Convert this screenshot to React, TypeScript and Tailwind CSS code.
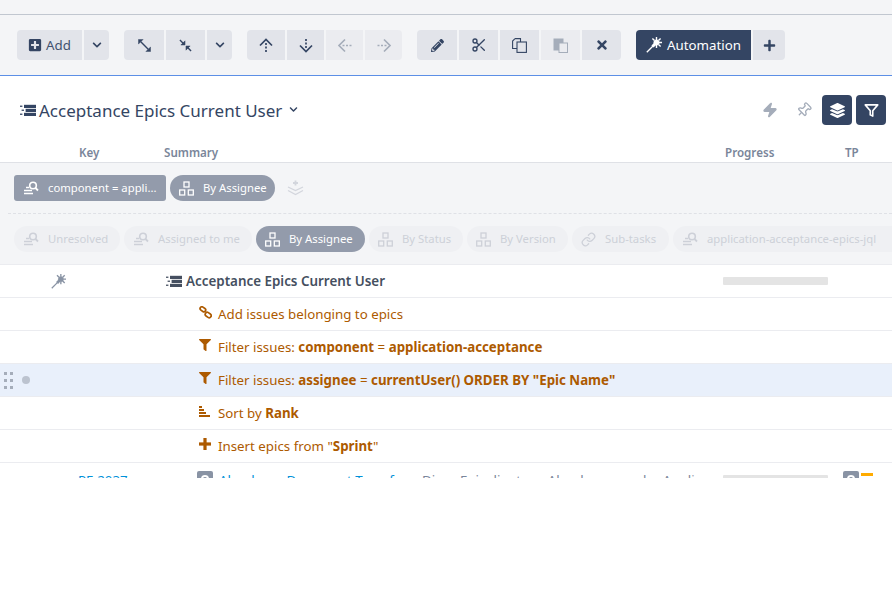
import { type ReactNode } from "react";
import { FaChevronDown, FaFilter, FaLayerGroup, FaPencilAlt, FaPlus, FaPlusSquare, FaTimes } from "react-icons/fa";
import { FiFilter } from "react-icons/fi";
import { LuLink, LuPin, LuScissors, LuZap } from "react-icons/lu";

const navy = "#344563";

function Btn({ w, children, off, left, right }: { w: string; children: ReactNode; off?: boolean; left?: boolean; right?: boolean }) {
  return (
    <div
      className={`${w} h-[30px] flex items-center justify-center gap-[4px] ${off ? "bg-[#ebecf0] text-[#a5adba]" : "bg-[#e2e4ea] text-[#344563]"} ${left ? "rounded-l-[4px]" : ""} ${right ? "rounded-r-[4px]" : ""}`}
    >
      {children}
    </div>
  );
}

function ListIcon({ size = 16, color = navy }: { size?: number; color?: string }) {
  return (
    <svg width={size} height={size * 0.8} viewBox="0 0 20 16" fill={color}>
      <rect x="5" y="1" width="15" height="4" />
      <rect x="7" y="6" width="13" height="4" />
      <rect x="5" y="11" width="15" height="4" />
      <rect x="0" y="2" width="3" height="1.6" />
      <rect x="2" y="7" width="3" height="1.6" />
      <rect x="0" y="12" width="3" height="1.6" />
    </svg>
  );
}

function Wand({ size = 16 }: { size?: number }) {
  return (
    <svg width={size} height={size} viewBox="0 0 16 16" fill="currentColor" stroke="currentColor">
      <path d="M0.8 15.2 L7 9" strokeWidth="1.3" fill="none" />
      <path d="M6.5 9.5 L9 7" strokeWidth="3" fill="none" />
      <circle cx="10.5" cy="5.5" r="2.8" strokeWidth="0.4" />
      <path d="M10.5 0 V3 M16 5.5 H13 M14.6 1.4 L12.5 3.5 M14.6 9.6 L12.5 7.5 M6.4 1.4 L8.5 3.5 M10.5 11 V8" strokeWidth="1.4" fill="none" />
    </svg>
  );
}

function Expand({ inward }: { inward?: boolean }) {
  return (
    <svg width="13" height="13" viewBox="0 0 14 14" fill="currentColor" stroke="currentColor">
      {inward ? (
        <>
          <path d="M1 1 L5 5 M9 9 L13 13" strokeWidth="1.5" fill="none" />
          <path d="M6.5 6.5 L6.5 2 L2 6.5 Z M7.5 7.5 L7.5 12 L12 7.5 Z" strokeWidth="0.5" />
        </>
      ) : (
        <>
          <path d="M3 3 L11 11" strokeWidth="1.5" fill="none" />
          <path d="M0.5 0.5 L5.5 0.5 L0.5 5.5 Z M13.5 13.5 L8.5 13.5 L13.5 8.5 Z" strokeWidth="0.5" />
        </>
      )}
    </svg>
  );
}

function DashArrow({ rotate }: { rotate: string }) {
  return (
    <svg width="16" height="15" viewBox="0 0 16 15" fill="none" stroke="currentColor" strokeWidth="1.7" className={rotate}>
      <path d="M2 7.5 L8 1.5 L14 7.5" />
      <path d="M8 5 V14" strokeDasharray="2 1.5" />
    </svg>
  );
}

function Copy() {
  return (
    <svg width="15" height="15" viewBox="0 0 15 15" fill="none" stroke="currentColor" strokeWidth="1.1">
      <path d="M3 0.6 H8.5 V4 M3 0.6 L0.6 3 V10.5 H5" />
      <rect x="5" y="4" width="9.4" height="10.4" fill="#e2e4ea" />
    </svg>
  );
}

function Paste() {
  return (
    <svg width="15" height="15" viewBox="0 0 15 15">
      <rect x="0.5" y="0.5" width="10" height="12" fill="#a5adba" />
      <rect x="6" y="5" width="8.5" height="9.5" fill="#ebecf0" stroke="#a5adba" />
    </svg>
  );
}

function Tree({ color = "currentColor" }: { color?: string }) {
  return (
    <svg width="15" height="15" viewBox="0 0 15 15" fill="none" stroke={color} strokeWidth="1.3">
      <rect x="5" y="1" width="5" height="5" />
      <rect x="0.7" y="9" width="5" height="5" />
      <rect x="9.3" y="9" width="5" height="5" />
    </svg>
  );
}

function SearchList({ color = "currentColor" }: { color?: string }) {
  return (
    <svg width="16" height="14" viewBox="0 0 16 14" fill="none" stroke={color}>
      <circle cx="10" cy="4.5" r="3.3" strokeWidth="1.6" />
      <path d="M12.5 7 L15 9.5" strokeWidth="1.8" />
      <path d="M3 6.5 H6 M1 9.5 H9 M1 12.5 H10" strokeWidth="1.5" />
    </svg>
  );
}

function LayersAdd() {
  return (
    <svg width="17" height="16" viewBox="0 0 17 16" fill="none" stroke="#d3d6dd" strokeWidth="1.3">
      <path d="M8.5 0.5 V5.5 M6 3 H11" strokeWidth="1.8" />
      <path d="M1 7 L8.5 10.5 L16 7" />
      <path d="M1 10.5 L8.5 14.5 L16 10.5" />
    </svg>
  );
}

function ChainIcon() {
  return (
    <svg width="13" height="13" viewBox="0 0 13 13" fill="none" stroke="currentColor" strokeWidth="1.7">
      <rect x="0.9" y="1.5" width="6" height="3.6" rx="1.8" transform="rotate(35 3.9 3.3)" />
      <rect x="6" y="7" width="6.4" height="4" rx="2" transform="rotate(35 9.2 9)" />
    </svg>
  );
}

function ThickPlus() {
  return (
    <svg width="12" height="12" viewBox="0 0 12 12" fill="currentColor">
      <rect x="4.4" y="0" width="3.2" height="12" />
      <rect x="0" y="4.4" width="12" height="3.2" />
    </svg>
  );
}

function Pill({ icon, label, active, square, w }: { icon: ReactNode; label: string; active?: boolean; square?: boolean; w: string }) {
  return (
    <div
      className={`${w} h-[26px] flex items-center pl-[9px] gap-[9px] shrink-0 whitespace-nowrap text-[11.3px] ${square ? "rounded-[3px]" : "rounded-full"} ${active ? "bg-[#939bab] text-white" : "bg-[#eff0f3] text-[#cdd0d8]"}`}
    >
      {icon}
      <span className="pt-[1px]">{label}</span>
    </div>
  );
}

function Row({ icon, children, hover }: { icon: ReactNode; children: ReactNode; hover?: boolean }) {
  return (
    <div className={`h-[33px] border-b border-[#ebecf0] flex items-center text-[13.3px] text-[#ad5a00] whitespace-nowrap ${hover ? "bg-[#e9f0fb]" : ""}`}>
      <div className="w-[4px]" />
      {hover ? (
        <div className="w-[195px] flex items-center gap-[9px]">
          <div className="grid grid-cols-2 gap-x-[3px] gap-y-[4px]">
            {[0, 1, 2, 3, 4, 5].map((i) => (
              <div key={i} className="w-[3px] h-[3px] bg-[#a5adba]" />
            ))}
          </div>
          <div className="w-[8px] h-[8px] rounded-full bg-[#bcc3cf]" />
        </div>
      ) : (
        <div className="w-[195px]" />
      )}
      <div className="w-[19px] -mt-[4px]">{icon}</div>
      <div className="pt-[1px]">{children}</div>
    </div>
  );
}

export default function App() {
  return (
    <div className="h-[600px] bg-white overflow-hidden font-['Noto_Sans','Open_Sans',sans-serif]">
      <div className="h-[478px] overflow-hidden">
        <div className="h-[15px] bg-[#f4f5f7] border-b border-[#c1c7d0]" />

        <div className="h-[61px] bg-[#f4f5f7] border-b border-[#5c8fe6] pl-[17px] pt-[15px] flex gap-[15px]">
          <div className="flex gap-[2px]">
            <Btn w="w-[65px]" left>
              <FaPlusSquare className="text-[14px]" />
              <span className="pt-[1px] text-[13.3px] text-[#42526e]">Add</span>
            </Btn>
            <Btn w="w-[25px]" right><FaChevronDown className="text-[10px]" /></Btn>
          </div>
          <div className="flex gap-[2px]">
            <Btn w="w-[40px]" left><Expand /></Btn>
            <Btn w="w-[39px]"><Expand inward /></Btn>
            <Btn w="w-[25px]" right><FaChevronDown className="text-[10px]" /></Btn>
          </div>
          <div className="flex gap-[2px]">
            <Btn w="w-[38px]" left><DashArrow rotate="" /></Btn>
            <Btn w="w-[37px]"><DashArrow rotate="rotate-180" /></Btn>
            <Btn w="w-[37px]" off><DashArrow rotate="-rotate-90" /></Btn>
            <Btn w="w-[37px]" off right><DashArrow rotate="rotate-90" /></Btn>
          </div>
          <div className="flex gap-[2px]">
            <Btn w="w-[40px]" left><FaPencilAlt className="text-[13px]" /></Btn>
            <Btn w="w-[39px]"><LuScissors className="text-[16px]" /></Btn>
            <Btn w="w-[39px]"><Copy /></Btn>
            <Btn w="w-[39px]" off><Paste /></Btn>
            <Btn w="w-[39px]" right><FaTimes className="text-[14px]" /></Btn>
          </div>
          <div className="flex gap-[2px]">
            <div className="w-[115px] h-[30px] bg-[#344563] text-white rounded-l-[4px] flex items-center justify-center gap-[5px]">
              <Wand />
              <span className="pt-[1px] text-[13.3px]">Automation</span>
            </div>
            <Btn w="w-[32px]" right><FaPlus className="text-[13px]" /></Btn>
          </div>
        </div>

        <div className="h-[87px] border-b border-[#dfe1e6] flex flex-col">
          <div className="h-[50px] pt-[19px] pl-[20px] pr-[6px] flex items-start justify-between">
            <div className="flex items-center h-[30px] text-[#344563]">
              <ListIcon />
              <span className="ml-[3px] pt-[1px] text-[17px]">Acceptance Epics Current User</span>
              <FaChevronDown className="ml-[7px] text-[9px] -mt-[2px]" />
            </div>
            <div className="flex items-center">
              <LuZap className="text-[16px] text-[#a5adba] fill-[#a5adba] mr-[18px]" />
              <LuPin className="text-[16px] text-[#a5adba] rotate-45 mr-[10px]" />
              <div className="w-[30px] h-[30px] rounded-[4px] bg-[#344563] text-white flex items-center justify-center mr-[4px]">
                <FaLayerGroup className="text-[15px]" />
              </div>
              <div className="w-[30px] h-[30px] rounded-[4px] bg-[#344563] text-white flex items-center justify-center">
                <FiFilter className="text-[15px] stroke-[2.6]" />
              </div>
            </div>
          </div>
          <div className="h-[36px] pt-[17px] flex text-[11.6px] font-semibold text-[#7a869a] leading-[20px] whitespace-nowrap">
            <div className="w-[79px]" />
            <div className="w-[85px]">Key</div>
            <div className="w-[561px]">Summary</div>
            <div className="w-[120px]">Progress</div>
            <div>TP</div>
          </div>
        </div>

        <div className="h-[102px] bg-[#f4f5f7] border-b border-[#ebecf0] pt-[12px]">
          <div className="flex items-center pl-[14px] gap-[4px]">
            <Pill w="w-[152px]" square active icon={<SearchList />} label="component = appli..." />
            <Pill w="w-[105px]" active icon={<Tree />} label="By Assignee" />
            <div className="ml-[8px]"><LayersAdd /></div>
          </div>
          <div className="mt-[12px] ml-[8px] border-t border-dashed border-[#dfe1e6]" />
          <div className="mt-[12px] flex pl-[14px] gap-[4px] overflow-hidden">
            <Pill w="w-[106px]" icon={<SearchList />} label="Unresolved" />
            <Pill w="w-[128px]" icon={<SearchList />} label="Assigned to me" />
            <Pill w="w-[109px]" active icon={<Tree />} label="By Assignee" />
            <Pill w="w-[94px]" icon={<Tree />} label="By Status" />
            <Pill w="w-[101px]" icon={<Tree />} label="By Version" />
            <Pill w="w-[97px]" icon={<LuLink className="text-[15px]" />} label="Sub-tasks" />
            <Pill w="w-[240px]" icon={<SearchList />} label="application-acceptance-epics-jql" />
          </div>
        </div>

        <div className="h-[33px] border-b border-[#ebecf0] flex items-center text-[13.4px] font-semibold text-[#454f60] whitespace-nowrap">
          <div className="w-[51px]" />
          <div className="w-[115px] text-[#8993a4]"><Wand size={15} /></div>
          <div className="w-[20px]"><ListIcon color="#454f60" /></div>
          <div className="w-[537px] pt-[1px]">Acceptance Epics Current User</div>
          <div className="w-[105px] h-[8px] rounded-[1px] bg-[#e4e4e4]" />
        </div>
        <Row icon={<ChainIcon />}>Add issues belonging to epics</Row>
        <Row icon={<FaFilter className="text-[12px]" />}>
          Filter issues: <b className="font-bold">component</b> = <b className="font-bold">application-acceptance</b>
        </Row>
        <Row hover icon={<FaFilter className="text-[12px]" />}>
          Filter issues: <b className="font-bold">assignee</b> = <b className="font-bold">currentUser() ORDER BY "Epic Name"</b>
        </Row>
        <Row icon={<svg width="11" height="11" viewBox="0 0 11 11" fill="currentColor"><rect x="0" y="0" width="3" height="2" /><rect x="0" y="3" width="5" height="2" /><rect x="0" y="6" width="7" height="2" /><rect x="0" y="9" width="11" height="2" /></svg>}>
          Sort by <b className="font-bold">Rank</b>
        </Row>
        <Row icon={<ThickPlus />}>
          Insert epics from "<b className="font-bold">Sprint</b>"
        </Row>

        <div className="h-[33px] flex items-start pt-[8px] text-[13.3px] whitespace-nowrap">
          <div className="w-[78px] shrink-0" />
          <div className="w-[119px] shrink-0 text-[#0091d9]">PF-2037</div>
          <div className="w-[16px] h-[16px] shrink-0 rounded-[2px] bg-[#8993a4] mr-[6px] flex items-center justify-center">
            <div className="w-[8px] h-[8px] rounded-full border-2 border-white" />
          </div>
          <div className="text-[#0091d9] w-[203px] shrink-0">Abnahme: Document Transfer</div>
          <div className="relative w-[287px] mr-[14px] shrink-0 overflow-hidden text-[#7a869a]">
            Diese Epic dient zur Abnahme von der Application
            <div className="absolute inset-y-0 right-0 w-[20px] bg-gradient-to-r from-transparent to-white" />
          </div>
          <div className="w-[105px] h-[8px] mt-[4px] shrink-0 rounded-[1px] bg-[#e4e4e4] mr-[15px]" />
          <div className="w-[16px] h-[16px] shrink-0 rounded-[2px] bg-[#8993a4] mr-[2px] flex items-center justify-center">
            <div className="w-[8px] h-[8px] rounded-full border-2 border-white" />
          </div>
          <div className="w-[12px] h-[3px] mt-[2px] shrink-0 bg-[#ffab00]" />
        </div>
      </div>
    </div>
  );
}
